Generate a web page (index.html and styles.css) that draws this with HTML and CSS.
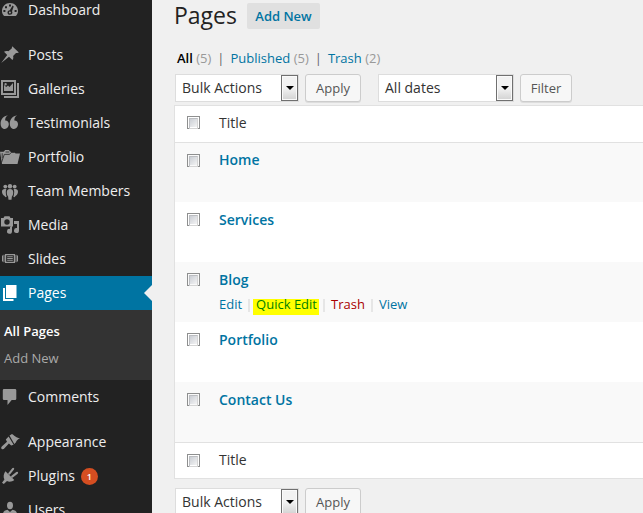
FILE: index.html
```html
<!DOCTYPE html>
<html lang="en">
<head>
<meta charset="utf-8">
<title>Pages</title>
<link rel="stylesheet" href="styles.css">
</head>
<body>
<div class="admin">
  <nav class="sidebar">
    <a class="item"><svg viewBox="0 0 20 20"><path fill-rule="evenodd" d="M4.200 16C2.700 14.700 2 13 2 11c0-4.500 3.600-8 8-8s8 3.500 8 8c0 2-.8 3.700-2.200 5zM9 4.500v2h2v-2zM5 6.200v2h2v-2zM3.400 10v2h2v-2zM14.600 10v2h2v-2zM12.600 5.500l-2.800 4.700c-1.500.1-2.300 1-2.300 2.300 0 1.400 1 2.300 2.400 2.300s2.500-1 2.500-2.300c0-.5-.1-.9-.4-1.300l1.700-4.800zM9.900 11.500a1 1 0 1 1 0 2 1 1 0 0 1 0-2z"/></svg><span>Dashboard</span></a>
    <a class="item group"><svg viewBox="0 0 20 20"><path d="M12.200 1.200l6.700 6.400-1.700.5-1.200-.2-2.900 3c.5 1.700.2 3.200-.7 4.100L9 11.700 1.200 18l6-8.100L4 6.800c1.300-.9 2.700-1 4.400-.6l3.300-2.800z"/></svg><span>Posts</span></a>
    <a class="item"><svg viewBox="0 0 20 20"><path fill-rule="evenodd" d="M1 1h15v15H1zM3 3v11h11V3zM17 4h2v15H4v-2h13zM4 12V6l2.200 2L8 6.500 9.500 8 13 4v8zM5.600 4a1.200 1.200 0 1 1 0 2.400 1.200 1.200 0 0 1 0-2.400z"/></svg><span>Galleries</span></a>
    <a class="item"><svg viewBox="0 0 20 20"><path d="M8 2.200C5.800 3.600 5 5.400 5.200 7.400c2.100-.1 3.600 1.500 3.600 3.700 0 2.700-1.800 4.900-4 4.900C2 16 .6 13.500.6 10.500.6 6.200 3.600 2.900 8 2.200zM17.200 2.200c-2.200 1.400-3 3.200-2.800 5.200 2.100-.1 3.600 1.500 3.600 3.700 0 2.700-1.800 4.900-4 4.900-2.800 0-4.200-2.500-4.200-5.500 0-4.300 3-7.600 7.400-8.300z"/></svg><span>Testimonials</span></a>
    <a class="item"><svg viewBox="0 0 20 20"><path d="M0 4.800h3.500L4.500 4l.5-1h4l.8 1.200L11 5h3.500l1 1.500H20L17.500 17H2z"/><path class="line" d="M1.500 15.500L4.300 7.400h5.200l1.600-1.900h3.800M5.500 5h3.700M2.200 6.200v5"/></svg><span>Portfolio</span></a>
    <a class="item"><svg viewBox="0 0 20 20"><circle cx="5.300" cy="5.600" r="1.900"/><circle cx="14.700" cy="5.600" r="1.900"/><circle cx="10" cy="5.200" r="2.200"/><path d="M6.400 8.300C5.600 9.500 5.500 12 6.600 16c-1 .4-1.700 0-2.100-.9C3 14 2 12.600 2 10.700c0-2 1.600-3.200 4.400-2.400zM13.600 8.300c.8 1.200.9 3.700-.2 7.700 1 .4 1.700 0 2.100-.9 1.500-1.100 2.500-2.500 2.500-4.400 0-2-1.600-3.200-4.400-2.400zM10 8c2.400 0 3.200 1.300 3.200 3.500 0 2-.5 3.300-1.300 4l-.4 3.200h-3l-.4-3.200c-.8-.7-1.300-2-1.300-4C6.800 9.300 7.600 8 10 8z"/></svg><span>Team Members</span></a>
    <a class="item"><svg viewBox="0 0 20 20"><path fill-rule="evenodd" d="M1 3h2.500l1-1.800h5L10.500 3H13v8.500H1zM7 4.300a2.700 2.700 0 1 0 0 5.400 2.700 2.700 0 0 0 0-5.400z"/><path d="M14 6h5v9.500a2.500 2.500 0 1 1-2-2.400V9h-3z"/><path d="M12 9.500v6.800a2.500 2.500 0 1 1-2-2.400v-1.600z"/></svg><span>Media</span></a>
    <a class="item"><svg viewBox="0 0 20 20"><path fill-rule="evenodd" d="M5 5h10v9H5zM6.200 6.200v6.600h7.600V6.200zM2 6.500h1v6H2zM3.500 5.800h1v7.400h-1zM15.500 5.800h1v7.400h-1zM17 6.500h1v6h-1zM7.200 7.300h5.600v1H7.200zM7.200 9h5.600v1H7.200zM7.200 10.700h5.600v1H7.200z"/></svg><span>Slides</span></a>
    <a class="item current"><svg viewBox="0 0 20 20"><path d="M6 2h10.500v13H6zM3 5h2v11h8.500v2H3z"/></svg><span>Pages</span></a>
    <div class="submenu"><a class="chosen">All Pages</a><a>Add New</a></div>
    <a class="item"><svg viewBox="0 0 20 20"><path d="M4 2h11q1.300 0 1.300 1.300v8.400q0 1.300-1.300 1.300h-3.300L7.500 18v-5H4q-1.200 0-1.200-1.300V3.300Q2.800 2 4 2z"/></svg><span>Comments</span></a>
    <a class="item group"><svg viewBox="0 0 20 20"><path d="M9.500 3.500L12 2c2 1 3.600 3.800 8 4.300-2.200.8-3.300 2.200-4.200 4.300L14.300 12z"/><path d="M8.600 4.500l5 8.200-2.400.9-2.300-2.100-4.200 4.400c-.8 1.200-2 1.600-3 1-.9-.9-.5-2.100.6-2.900L7 9.800 5.800 7.500z"/></svg><span>Appearance</span></a>
    <a class="item"><svg viewBox="0 0 20 20"><path d="M5.400 5.200l8.900 8.800c-2 1.700-5 2.200-7.300 1.100L3.800 18 2 16.800l2.400-3.300c-1.300-2.600-.8-5.900 1-8.300z"/><path class="prong" d="M9.300 7.600l3.800-4.700M12.200 10.700L17 6.800"/></svg><span>Plugins</span><b class="badge">1</b></a>
    <a class="item"><svg viewBox="0 0 20 20"><ellipse cx="10" cy="5.500" rx="3" ry="3.700"/><path d="M7.500 9.800L10 12l2.500-2.200c2.700.4 4.500 1.900 4.500 4.200v4H3v-4c0-2.300 1.800-3.800 4.500-4.200z"/></svg><span>Users</span></a>
  </nav>
  <main class="content">
    <header class="heading"><h1>Pages</h1><a class="add">Add New</a></header>
    <div class="filters"><b>All</b> <i>(5)</i><span class="bar">|</span><a>Published</a> <i>(5)</i><span class="bar">|</span><a>Trash</a> <i>(2)</i></div>
    <div class="tools">
      <div class="select"><span>Bulk Actions</span><div class="arrow"></div></div>
      <button>Apply</button>
      <div class="select dates"><span>All dates</span><div class="arrow"></div></div>
      <button class="filter">Filter</button>
    </div>
    <section class="table">
      <div class="row head"><div class="check"></div><span>Title</span></div>
      <div class="row odd first"><div class="check"></div><a class="title">Home</a></div>
      <div class="row"><div class="check"></div><a class="title">Services</a></div>
      <div class="row odd"><div class="check"></div><div><a class="title">Blog</a>
        <div class="actions"><a>Edit</a><s></s><a class="quick">Quick Edit</a><s></s><a class="trash">Trash</a><s></s><a>View</a></div></div></div>
      <div class="row"><div class="check"></div><a class="title">Portfolio</a></div>
      <div class="row odd"><div class="check"></div><a class="title">Contact Us</a></div>
      <div class="row foot"><div class="check"></div><span>Title</span></div>
    </section>
    <div class="tools bottom">
      <div class="select"><span>Bulk Actions</span><div class="arrow"></div></div>
      <button>Apply</button>
    </div>
  </main>
</div>
</body>
</html>
```
FILE: styles.css
```css
* { box-sizing: border-box; }
body { margin: 0; background: #f0f0f0; color: #333; font: 14px/20px "Open Sans", sans-serif; overflow: hidden; }
.admin { display: flex; height: 513px; overflow: hidden; }
.sidebar { width: 152px; flex: none; background: #222; margin-top: -7px; height: 540px; }
.item { display: flex; align-items: center; height: 34px; color: #eee; position: relative; }
.item svg { width: 20px; height: 20px; margin-right: 8px; flex: none; fill: #999; }
.item .line { fill: none; stroke: #222; stroke-width: .8; }
.item .prong { fill: none; stroke: #999; stroke-width: 2.2; stroke-linecap: round; }
.group { margin-top: 11px; }
.current { background: #0074a2; color: #fff; }
.current svg { fill: #fff; }
.current::after { content: ""; position: absolute; right: 0; top: 9px; border: 8px solid transparent; border-right-color: #f0f0f0; border-left: 0; }
.submenu { height: 70px; background: #333; padding: 8px 4px; font-size: 13px; }
.submenu a { display: block; height: 27px; line-height: 27px; color: #aaa; }
.submenu .chosen { color: #fff; font-weight: 600; }
.badge { width: 17px; height: 17px; margin-left: 6px; border-radius: 50%; background: #d54e21; color: #fff; font-size: 9px; line-height: 17px; text-align: center; font-weight: 600; }
.content { flex: 1; padding-left: 22px; min-width: 0; }
.heading { display: flex; height: 30px; }
h1 { margin: 0; font-size: 23px; line-height: 30px; font-weight: 400; color: #222; width: 73px; }
.add { margin-top: 3px; width: 73px; height: 26px; border-radius: 2px; background: #e0e0e0; color: #0074a2; font-size: 13px; font-weight: 600; line-height: 26px; text-align: center; }
.filters { margin: 18px 0 0 3px; height: 26px; font-size: 13px; line-height: 20px; white-space: pre; }
.filters b { color: #000; font-weight: 600; }
.filters i { color: #999; font-style: normal; }
.filters .bar { margin: 0 6px; color: #666; }
a { color: #0074a2; }
.tools { display: flex; height: 28px; padding-left: 1px; }
.select { width: 124px; height: 28px; display: flex; justify-content: space-between; padding: 0 0 0 6px; border: 1px solid #ddd; background: #fff; line-height: 26px; }
.arrow { width: 17px; height: 26px; border: 1px solid #707070; background: linear-gradient(#f2f2f2 50%, #d2d2d2); box-shadow: inset 0 0 0 1px #fafafa; display: flex; align-items: center; justify-content: center; }
.arrow::after { content: ""; border: 4px solid transparent; border-top-color: #000; border-bottom: 0; }
button { width: 56px; height: 28px; margin-left: 6px; padding: 0; border: 1px solid #ccc; border-radius: 3px; background: #f7f7f7; color: #555; font: 13px/26px "Open Sans", sans-serif; box-shadow: 0 1px 0 rgba(0,0,0,.08); }
.dates { width: 136px; margin-left: 17px; }
.filter { width: 52px; }
.table { margin-top: 3px; height: 374px; border: 1px solid #e1e1e1; border-right: 0; background: #fff; }
.row { height: 60px; display: flex; padding: 8px 0 0 12px; }
.odd { background: #f9f9f9; }
.head { height: 37px; padding-top: 7px; border-bottom: 1px solid #e1e1e1; }
.first { height: 59px; padding-top: 7px; }
.foot { height: 36px; padding-top: 7px; border-top: 1px solid #e1e1e1; }
.check { width: 13px; height: 13px; flex: none; margin: 3px 19px 0 0; border: 1px solid #8e8f8f; background: linear-gradient(135deg, #c5c9d0, #f6f6f6) content-box #f4f4f4; padding: 1px; }
.first .check, .foot .check { margin-top: 4px; }
.check::after { content: ""; display: block; height: 9px; border: 1px solid #bcbec2; border-right-color: #d4d4d4; border-bottom-color: #d4d4d4; }
.title { display: block; font-weight: 600; }
.actions { display: flex; margin-top: 6px; font-size: 13px; line-height: 17px; }
.actions s { width: 2px; height: 13px; margin: 3px 6px 0; background: #e6e6e6; }
.quick { height: 16px; margin: 3px -2px 0 -3px; padding: 0 2px 0 3px; background: #ff0; color: #008000; line-height: 11px; }
.trash { color: #a00; }
.bottom { margin-top: 9px; }
```
